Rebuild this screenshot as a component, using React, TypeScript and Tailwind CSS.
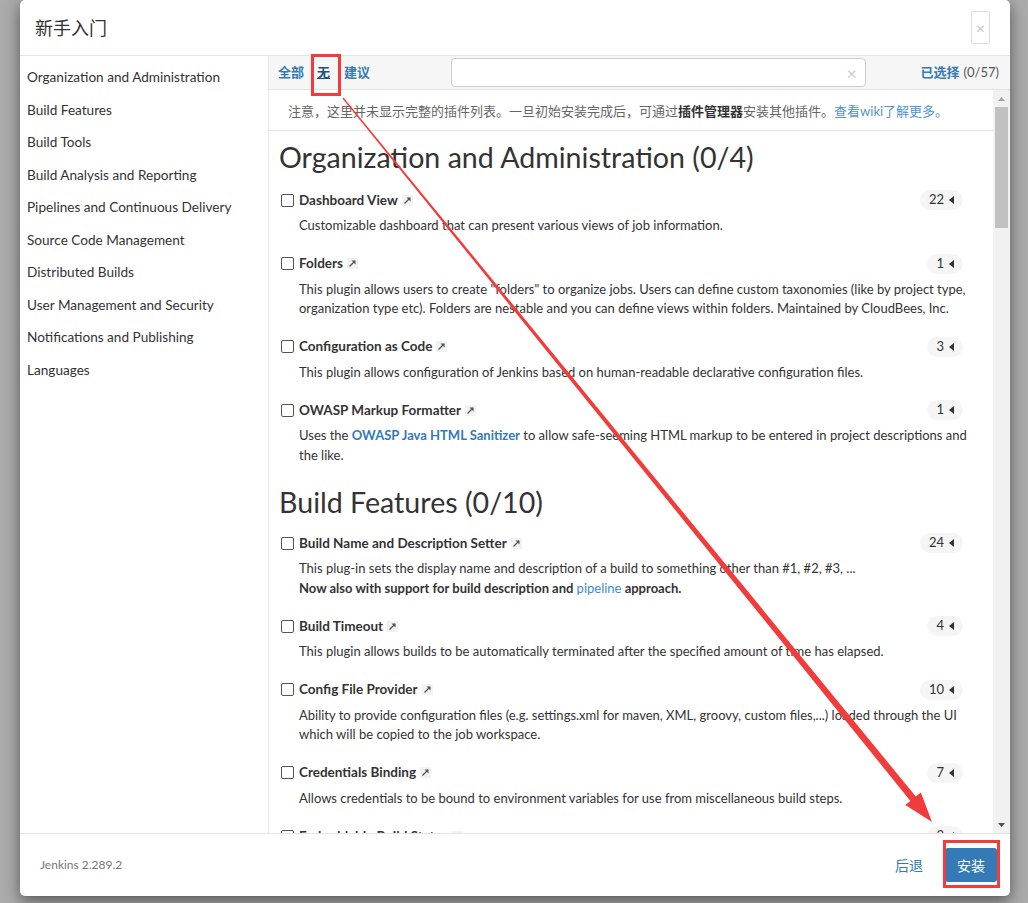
import React from 'react';

const categories = [
  'Organization and Administration',
  'Build Features',
  'Build Tools',
  'Build Analysis and Reporting',
  'Pipelines and Continuous Delivery',
  'Source Code Management',
  'Distributed Builds',
  'User Management and Security',
  'Notifications and Publishing',
  'Languages',
];

interface Plugin {
  name: string;
  deps: number;
  desc: React.ReactNode[];
}

interface Section {
  title: string;
  plugins: Plugin[];
}

const sections: Section[] = [
  {
    title: 'Organization and Administration (0/4)',
    plugins: [
      {
        name: 'Dashboard View',
        deps: 22,
        desc: ['Customizable dashboard that can present various views of job information.'],
      },
      {
        name: 'Folders',
        deps: 1,
        desc: [
          'This plugin allows users to create "folders" to organize jobs. Users can define custom taxonomies (like by project type,',
          'organization type etc). Folders are nestable and you can define views within folders. Maintained by CloudBees, Inc.',
        ],
      },
      {
        name: 'Configuration as Code',
        deps: 3,
        desc: ['This plugin allows configuration of Jenkins based on human-readable declarative configuration files.'],
      },
      {
        name: 'OWASP Markup Formatter',
        deps: 1,
        desc: [
          <>
            Uses the <a className="font-bold text-[#337ab7]">OWASP Java HTML Sanitizer</a> to allow safe-seeming HTML markup to be entered in project descriptions and
          </>,
          'the like.',
        ],
      },
    ],
  },
  {
    title: 'Build Features (0/10)',
    plugins: [
      {
        name: 'Build Name and Description Setter',
        deps: 24,
        desc: [
          'This plug-in sets the display name and description of a build to something other than #1, #2, #3, ...',
          <b>
            Now also with support for build description and <a className="font-normal text-[#3d8bd0]">pipeline</a> approach.
          </b>,
        ],
      },
      {
        name: 'Build Timeout',
        deps: 4,
        desc: ['This plugin allows builds to be automatically terminated after the specified amount of time has elapsed.'],
      },
      {
        name: 'Config File Provider',
        deps: 10,
        desc: [
          'Ability to provide configuration files (e.g. settings.xml for maven, XML, groovy, custom files,...) loaded through the UI',
          'which will be copied to the job workspace.',
        ],
      },
      {
        name: 'Credentials Binding',
        deps: 7,
        desc: ['Allows credentials to be bound to environment variables for use from miscellaneous build steps.'],
      },
      {
        name: 'Embeddable Build Status',
        deps: 2,
        desc: ['Fancy but still simple status badges'],
      },
      {
        name: 'Rebuilder',
        deps: 1,
        desc: ['This plugin is for rebuilding a job using the same parameters.'],
      },
    ],
  },
];

function ExtIcon() {
  return (
    <span className="ml-[4px] flex h-[11px] w-[11px] items-center justify-center bg-[#f2f2f2]">
      <svg width="9" height="9" viewBox="0 0 9 9">
        <path d="M1.5 7.5 L7 2" stroke="#555" strokeWidth="1.2" />
        <path d="M3.5 1.5 H7.5 V5.5 Z" fill="#555" />
      </svg>
    </span>
  );
}

function Caret() {
  return (
    <svg width="5" height="8" viewBox="0 0 5 8" className="ml-[5px]">
      <path d="M5 0 V8 L0 4 Z" fill="#333" />
    </svg>
  );
}

function PluginItem({ plugin }: { plugin: Plugin }) {
  return (
    <div className="mb-[18px]">
      <div className="flex h-5 items-center">
        <span className="ml-[2px] h-[13px] w-[13px] rounded-[2px] border border-[#555] bg-white" />
        <span className="ml-[5px] text-[13.5px] font-bold text-[#333]">{plugin.name}</span>
        <ExtIcon />
        <span className="ml-auto mr-[15px] flex h-5 items-center rounded-full bg-[#f5f5f5] px-[9px] text-[13px] text-[#333]">
          {plugin.deps}
          <Caret />
        </span>
      </div>
      <div className="mt-[6px] pl-5 text-[13px] leading-[19.5px] text-[#333]">
        {plugin.desc.map((line, i) => (
          <div key={i} className="whitespace-nowrap">
            {line}
          </div>
        ))}
      </div>
    </div>
  );
}

function Overlay() {
  return (
    <svg className="pointer-events-none absolute left-0 top-0" width="1028" height="903">
      <rect x="312.5" y="55.5" width="27" height="39" fill="none" stroke="#f23c3c" strokeWidth="3" />
      <rect x="944.5" y="841.5" width="54" height="45" fill="none" stroke="#f23c3c" strokeWidth="3" />
      <polygon
        points="343.5,97.6 915.8,796.5 920.9,792.4 932,822 905.3,805 910.4,800.9 342.5,98.4"
        fill="#f23c3c"
      />
    </svg>
  );
}

export default function App() {
  return (
    <div className="relative h-[903px] w-[1028px] overflow-hidden bg-[#ababab] pl-[20px] [font-family:Lato,'Noto_Sans_CJK_SC',sans-serif]">
      <div className="flex h-[896px] w-[990px] flex-col overflow-hidden rounded-[5px] bg-white shadow-[0_5px_15px_rgba(0,0,0,0.5)]">
        {/* header */}
        <div className="flex h-[56px] shrink-0 items-center justify-between border-b border-[#e5e5e5] pl-[15px] pr-[20px]">
          <h4 className="pt-[1px] text-[18px] text-[#333]">新手入门</h4>
          <button className="flex h-[33px] w-[19px] items-center justify-center rounded-[2px] border border-[#ddd] text-[16px] text-[#c8c8c8]">
            ×
          </button>
        </div>

        {/* body */}
        <div className="flex h-[777px] shrink-0">
          <div className="w-[249px] shrink-0 border-r border-[#e5e5e5] bg-white pt-[5px]">
            {categories.map((c) => (
              <div key={c} className="flex h-[32.5px] items-center pl-[7px] text-[13.6px] text-[#333]">
                {c}
              </div>
            ))}
          </div>

          <div className="flex min-w-0 flex-1 flex-col">
            {/* tabs */}
            <div className="flex h-[34px] shrink-0 items-center border-b border-[#e3e3e3] bg-[#f6f6f6] pl-[9px] pr-[11px]">
              <a className="text-[13px] font-bold text-[#337ab7]">全部</a>
              <a className="ml-[13px] text-[13px] font-bold text-[#23527c] underline">无</a>
              <a className="ml-[14px] text-[13px] font-bold text-[#337ab7]">建议</a>
              <div className="ml-[81px] flex h-[29px] w-[415px] items-center justify-end rounded-[4px] border border-[#ccc] bg-white pr-[8px]">
                <span className="text-[18px] leading-none text-[#cccccc]">×</span>
              </div>
              <div className="ml-auto text-[13px]">
                <span className="font-bold text-[#337ab7]">已选择</span>
                <span className="ml-[4px] text-[#555]">(0/57)</span>
              </div>
            </div>

            {/* scroll area */}
            <div className="flex min-h-0 flex-1">
              <div className="min-w-0 flex-1 overflow-hidden">
                <div className="flex h-[41px] items-center border-b border-[#e5e5e5] pl-[19px] pt-[3px] text-[13px] text-[#666]">
                  注意，这里并未显示完整的插件列表。一旦初始安装完成后，可通过<b className="text-[#333]">插件管理器</b>安装其他插件。
                  <a className="text-[#4f94cd]">查看wiki了解更多。</a>
                </div>
                <div className="pl-[10px] pr-[15px]">
                  {sections.map((s, i) => (
                    <div key={s.title}>
                      <h2
                        className={
                          i === 0
                            ? 'mb-[16px] mt-[9px] text-[28.6px] leading-[34px] text-[#333]'
                            : 'mb-[14px] mt-[20px] text-[28.6px] leading-[34px] text-[#333]'
                        }
                      >
                        {s.title}
                      </h2>
                      {s.plugins.map((p) => (
                        <PluginItem key={p.name} plugin={p} />
                      ))}
                    </div>
                  ))}
                </div>
              </div>

              {/* scrollbar */}
              <div className="flex w-[17px] shrink-0 flex-col items-center bg-[#f1f1f1]">
                <div className="flex h-[17px] w-full items-center justify-center">
                  <svg width="7" height="4" viewBox="0 0 7 4">
                    <path d="M0 4 L3.5 0 L7 4 Z" fill="#a3a3a3" />
                  </svg>
                </div>
                <div className="h-[121px] w-[13px] bg-[#c1c1c1]" />
                <div className="flex-1" />
                <div className="flex h-[17px] w-full items-center justify-center">
                  <svg width="7" height="4" viewBox="0 0 7 4">
                    <path d="M0 0 L7 0 L3.5 4 Z" fill="#505050" />
                  </svg>
                </div>
              </div>
            </div>
          </div>
        </div>

        {/* footer */}
        <div className="flex h-[63px] shrink-0 items-center border-t border-[#e5e5e5] pl-[20px] pr-[13px]">
          <span className="text-[12px] text-[#777]">Jenkins 2.289.2</span>
          <a className="ml-auto text-[14px] text-[#337ab7]">后退</a>
          <button className="ml-[22px] h-[34px] w-[52px] rounded-[3px] bg-[#337ab7] text-[14px] text-white">安装</button>
        </div>
      </div>
      <Overlay />
    </div>
  );
}
